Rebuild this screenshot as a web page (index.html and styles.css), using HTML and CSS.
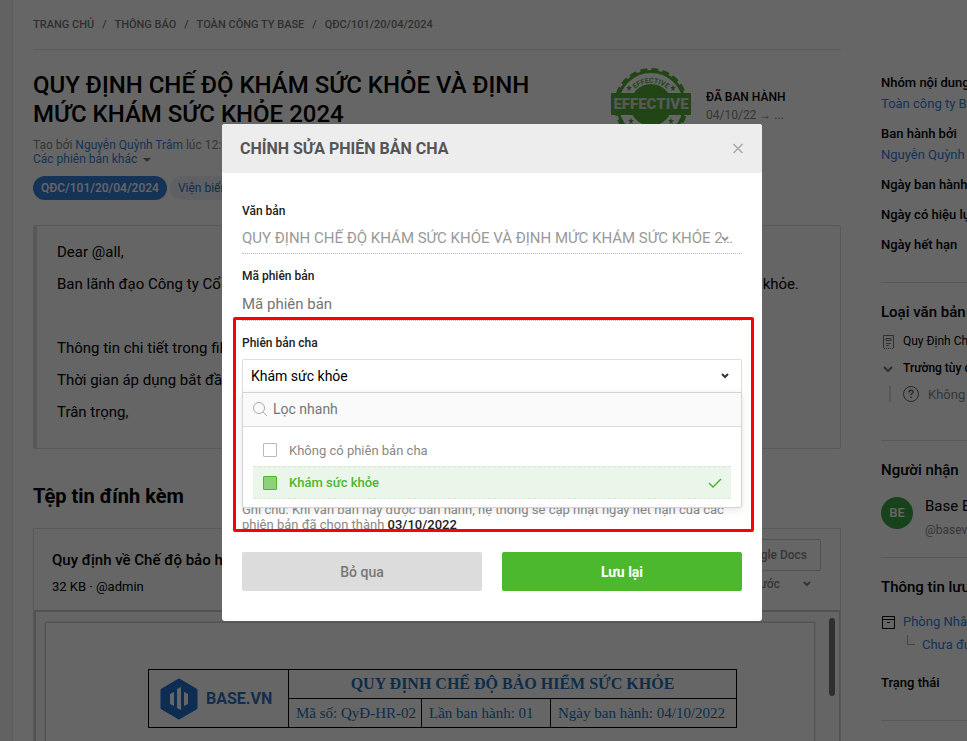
FILE: index.html
```
<!DOCTYPE html>
<html lang="vi">
<head>
    <meta charset="UTF-8">
    <meta name="viewport" content="width=device-width, initial-scale=1.0">
    <title>Chỉnh sửa phiên bản cha</title>
    <link rel="stylesheet" href="styles.css">
</head>
<body>
    <div class="page">
        <main class="main">
            <nav class="breadcrumb">
                <a href="#">TRANG CHỦ</a><span>/</span>
                <a href="#">THÔNG BÁO</a><span>/</span>
                <a href="#">TOÀN CÔNG TY BASE</a><span>/</span>
                <a href="#">QĐC/101/20/04/2024</a>
            </nav>

            <header class="doc-header">
                <div class="doc-heading">
                    <h1 class="doc-title">QUY ĐỊNH CHẾ ĐỘ KHÁM SỨC KHỎE VÀ ĐỊNH MỨC KHÁM SỨC KHỎE 2024</h1>
                    <p class="doc-meta">Tạo bởi <a href="#">Nguyễn Quỳnh Trâm</a> lúc 12:00</p>
                    <p class="doc-meta"><a href="#">Các phiên bản khác</a> <span class="caret"></span></p>
                    <div class="tags">
                        <span class="tag tag-primary">QĐC/101/20/04/2024</span>
                        <span class="tag">Viện biển</span>
                    </div>
                </div>
                <div class="doc-status">
                    <svg class="stamp" viewBox="0 0 80 76" aria-hidden="true">
                        <circle cx="40" cy="38" r="35" fill="#55ad36"/>
                        <circle cx="40" cy="38" r="35" fill="none" stroke="#55ad36" stroke-width="4" stroke-dasharray="7 4"/>
                        <circle cx="40" cy="38" r="26" fill="none" stroke="#fff" stroke-width="12"/>
                        <circle cx="40" cy="38" r="21" fill="#55ad36"/>
                        <path id="arc" d="M17 33A24 24 0 0 1 63 33" fill="none"/>
                        <text class="stamp-arc"><textPath href="#arc" startOffset="50%">EFFECTIVE</textPath></text>
                        <path d="M18 18l1 2 2 0-2 2 1 2-2-1-2 1 1-2-2-2 2 0zM62 18l1 2 2 0-2 2 1 2-2-1-2 1 1-2-2-2 2 0zM20 51l1 2 2 0-2 2 1 2-2-1-2 1 1-2-2-2 2 0zM60 51l1 2 2 0-2 2 1 2-2-1-2 1 1-2-2-2 2 0z" fill="#55ad36"/>
                        <rect y="26" width="80" height="22" rx="1" fill="#55ad36"/>
                        <text class="stamp-text" x="40" y="42">EFFECTIVE</text>
                    </svg>
                    <div class="status-text">
                        <strong>ĐÃ BAN HÀNH</strong>
                        <span>04/10/22 → ...</span>
                    </div>
                </div>
            </header>

            <section class="doc-body">
                <p>Dear @all,</p>
                <p class="split"><span>Ban lãnh đạo Công ty Cổ</span><span>khỏe.</span></p>
                <p>&nbsp;</p>
                <p>Thông tin chi tiết trong file</p>
                <p>Thời gian áp dụng bắt đầu</p>
                <p>Trân trọng,</p>
            </section>

            <h2 class="section-title">Tệp tin đính kèm</h2>

            <section class="file-card">
                <div class="file-head">
                    <div>
                        <h3 class="file-name">Quy định về Chế độ bảo hiểm</h3>
                        <p class="file-info">32 KB · @admin</p>
                    </div>
                    <div class="file-actions">
                        <button class="docs-btn" type="button">Google Docs</button>
                        <button class="size-btn" type="button">Kích thước
                            <svg width="8" height="6" viewBox="0 0 8 6"><path d="M1 1l3 3 3-3" fill="none" stroke="currentColor" stroke-width="2"/></svg>
                        </button>
                    </div>
                </div>
                <div class="preview">
                    <div class="sheet">
                        <table class="sheet-table">
                            <colgroup><col class="col-logo"><col class="col-code"><col class="col-rev"><col></colgroup>
                            <tr>
                                <td rowspan="2">
                                    <div class="brand">
                                        <svg width="38" height="42" viewBox="0 0 38 42">
                                            <path d="M19 2L36 12V30L19 40 2 30V12z" fill="#2270cc" stroke="#2270cc" stroke-width="3" stroke-linejoin="round"/>
                                            <path d="M10 16l4-2v14l-4-2zM17 11l4-2v23l-4-2zM24 14l4 2v10l-4 2z" fill="#fff"/>
                                        </svg>
                                        <span>BASE.VN</span>
                                    </div>
                                </td>
                                <th colspan="3">QUY ĐỊNH CHẾ ĐỘ BẢO HIỂM SỨC KHỎE</th>
                            </tr>
                            <tr>
                                <td>Mã số: QyĐ-HR-02</td>
                                <td>Lần ban hành: 01</td>
                                <td>Ngày ban hành: 04/10/2022</td>
                            </tr>
                        </table>
                    </div>
                    <div class="scroll-thumb"></div>
                </div>
            </section>
        </main>

        <aside class="side">
            <section class="side-block">
                <dl class="facts">
                    <dt>Nhóm nội dung</dt>
                    <dd><a href="#">Toàn công ty BASE</a></dd>
                    <dt>Ban hành bởi</dt>
                    <dd><a href="#">Nguyễn Quỳnh Trâm</a></dd>
                    <dt>Ngày ban hành</dt>
                    <dt>Ngày có hiệu lực</dt>
                    <dt>Ngày hết hạn</dt>
                </dl>
            </section>
            <section class="side-block side-type">
                <h4>Loại văn bản</h4>
                <p class="side-row">
                    <svg width="16" height="14" viewBox="0 0 16 14"><path d="M2.5 13V.5h10V13M5 3.5h5v2H5zM5 8.5h5M5 10.5h3" fill="none" stroke="#777"/><path d="M3 13.5h10" stroke="#777" stroke-dasharray="1 1"/></svg>
                    Quy Định Chung
                </p>
                <p class="side-row side-strong">
                    <svg width="16" height="14" viewBox="0 0 16 14"><path d="M3 5l4 4 4-4" fill="none" stroke="#777" stroke-width="2"/></svg>
                    Trường tùy chỉnh
                </p>
                <p class="side-sub">
                    <svg width="16" height="16" viewBox="0 0 16 16"><circle cx="8" cy="8" r="7.5" fill="none" stroke="#666"/><path d="M6 6.500c0-3 4-3 4-.5 0 1.500-2 1.500-2 3M8 10.500v1.500" fill="none" stroke="#666" stroke-width="1.500"/></svg>
                    Không có
                </p>
            </section>
            <section class="side-block side-people">
                <h4>Người nhận</h4>
                <div class="person">
                    <span class="avatar">BE</span>
                    <div>
                        <div class="person-name">Base Enterprise</div>
                        <div class="person-id">@basevn</div>
                    </div>
                </div>
            </section>
            <section class="side-block side-store">
                <h4>Thông tin lưu trữ</h4>
                <p class="side-row">
                    <svg width="16" height="14" viewBox="0 0 16 14"><path d="M1.500 1.500h12v12h-12zM1.500 4.500h12M6 7.500h3" fill="none" stroke="#000"/></svg>
                    <a href="#">Phòng Nhân sự</a>
                </p>
                <p class="side-leaf"><span class="elbow"></span><a href="#">Chưa được lưu</a></p>
                <p class="side-state">Trạng thái</p>
            </section>
        </aside>
    </div>

    <div class="overlay">
        <form class="modal" role="dialog" aria-labelledby="modalTitle">
            <header class="modal-header">
                <h2 id="modalTitle">CHỈNH SỬA PHIÊN BẢN CHA</h2>
                <button class="close" type="button" aria-label="Đóng">
                    <svg width="12" height="12" viewBox="0 0 12 12"><path d="M1.500 1l9 9M10.500 1l-9 9" stroke="#aaa" stroke-width="1.500"/></svg>
                </button>
            </header>
            <div class="modal-body">
                <div class="field">
                    <label for="doc">Văn bản</label>
                    <div class="line-wrap">
                        <select id="doc" class="line-input" disabled>
                            <option>QUY ĐỊNH CHẾ ĐỘ KHÁM SỨC KHỎE VÀ ĐỊNH MỨC KHÁM SỨC KHỎE 2024</option>
                        </select>
                        <svg class="line-arrow" width="8" height="6" viewBox="0 0 8 6"><path d="M1 1l3 3 3-3" fill="none" stroke="#999" stroke-width="2"/></svg>
                    </div>
                </div>
                <div class="field">
                    <label for="code">Mã phiên bản</label>
                    <input id="code" class="line-input line-text" type="text" placeholder="Mã phiên bản">
                </div>
                <div class="field">
                    <label for="parent">Phiên bản cha</label>
                    <div class="dropdown">
                        <button id="parent" class="dropdown-toggle" type="button" aria-haspopup="listbox" aria-expanded="true">
                            Khám sức khỏe
                            <svg width="8" height="6" viewBox="0 0 8 6"><path d="M1 1l3 3 3-3" fill="none" stroke="#333" stroke-width="2"/></svg>
                        </button>
                        <div class="dropdown-menu">
                            <div class="filter">
                                <svg width="14" height="14" viewBox="0 0 14 14"><circle cx="6" cy="6" r="5.500" fill="none" stroke="#aaa"/><path d="M10 10l4 4" stroke="#aaa"/></svg>
                                <input type="text" placeholder="Lọc nhanh" aria-label="Lọc nhanh">
                            </div>
                            <div class="options">
                                <label class="option"><input type="checkbox">Không có phiên bản cha</label>
                                <label class="option selected"><input type="checkbox" checked>Khám sức khỏe
                                    <svg width="14" height="10" viewBox="0 0 14 10"><path d="M1 5l4 4 8-8" fill="none" stroke="#4cb82e" stroke-width="1.500"/></svg>
                                </label>
                            </div>
                        </div>
                    </div>
                </div>
                <p class="note">Ghi chú: Khi văn bản này được ban hành, hệ thống sẽ cập nhật ngày hết hạn của các phiên bản đã chọn thành <b>03/10/2022</b></p>
                <div class="modal-actions">
                    <button class="btn btn-cancel" type="button">Bỏ qua</button>
                    <button class="btn btn-save" type="submit">Lưu lại</button>
                </div>
            </div>
            <div class="highlight"></div>
        </form>
    </div>
</body>
</html>
```
FILE: styles.css
```
* {
    margin: 0;
    padding: 0;
    box-sizing: border-box;
}

body {
    font-family: Roboto, Arial, sans-serif;
    font-size: 13px;
    color: #000;
    background: #f6f6f6;
    height: 100vh;
    overflow: hidden;
}

a {
    color: #3480da;
    text-decoration: none;
}

button, input, select {
    font-family: inherit;
}

.page {
    display: flex;
    height: 100vh;
    overflow: hidden;
    margin-left: 12px;
    border-left: 1px solid #e4e4e4;
    background: #fff;
}

.main {
    flex: 1;
    min-width: 0;
    padding: 0 40px 0 20px;
}

/* breadcrumb */
.breadcrumb {
    display: flex;
    gap: 8px;
    height: 50px;
    line-height: 50px;
    font-size: 11px;
    font-weight: 500;
    border-bottom: 1px solid #e6e6e6;
}

.breadcrumb a, .breadcrumb span {
    color: #777;
}

/* document header */
.doc-header {
    display: flex;
    justify-content: space-between;
    padding-top: 21px;
}

.doc-heading {
    width: 520px;
}

.doc-title {
    font-size: 24px;
    font-weight: 500;
    line-height: 29px;
    margin-bottom: 9px;
}

.doc-meta {
    font-size: 12px;
    line-height: 14px;
    color: #888;
}

.caret {
    display: inline-block;
    margin-left: 3px;
    border: 4px solid transparent;
    border-top-color: #777;
    border-bottom: 0;
    vertical-align: middle;
}

.tags {
    display: flex;
    gap: 3px;
    margin-top: 10px;
}

.tag {
    padding: 0 8px;
    line-height: 24px;
    font-size: 12px;
    border-radius: 12px;
    background: #eceff8;
    color: #3470c4;
}

.tag-primary {
    background: #3480da;
    color: #fff;
    font-weight: 500;
}

.doc-status {
    display: flex;
    gap: 15px;
    width: 230px;
}

.stamp {
    width: 80px;
    height: 76px;
    margin-top: -4px;
}

.stamp-text {
    font: 900 15px Roboto, sans-serif;
    fill: #ddd;
    text-anchor: middle;
}

.stamp-arc {
    font: 700 7px Roboto, sans-serif;
    fill: #55ad36;
    text-anchor: middle;
}

.status-text {
    padding-top: 17px;
    font-size: 12px;
    line-height: 18px;
}

.status-text strong {
    display: block;
    font-weight: 500;
}

.status-text span {
    color: #888;
}

/* document text */
.doc-body {
    margin-top: 25px;
    padding: 10px 41px 20px 20px;
    border: 1px solid #ddd;
    border-left: 4px solid #ddd;
    border-radius: 2px;
    background: #fdfdfd;
    font-size: 15px;
    line-height: 32px;
}

.split {
    display: flex;
    justify-content: space-between;
}

.section-title {
    margin: 34px 0 19px;
    font-size: 20px;
    font-weight: 700;
    line-height: 26px;
}

/* attachment */
.file-card {
    border: 1px solid #ddd;
}

.file-head {
    display: flex;
    justify-content: space-between;
    height: 81px;
    padding: 10px 19px 10px 18px;
}

.file-name {
    margin-top: 8px;
    font-size: 15px;
    font-weight: 500;
    line-height: 26px;
}

.file-info {
    font-size: 13px;
    line-height: 28px;
}

.file-actions {
    display: flex;
    flex-direction: column;
    align-items: flex-end;
    color: #888;
}

.docs-btn, .size-btn {
    font-size: 12px;
    font-weight: 500;
    color: #888;
    background: none;
    border: 0;
}

.docs-btn {
    height: 32px;
    padding: 0 13px;
    border: 1px solid #ccc;
    border-radius: 2px;
}

.size-btn {
    display: flex;
    align-items: center;
    gap: 23px;
    height: 26px;
    padding: 0 10px;
}

.preview {
    display: flex;
    align-items: flex-start;
    height: 300px;
    padding: 6px 4px 0 9px;
    border: 2px solid #ccc;
    border-width: 2px 1px 0 2px;
    background: #fcfcfc;
}

.sheet {
    flex: 1;
    height: 290px;
    margin-top: 4px;
    margin-right: 14px;
    padding: 46px 77px 0 102px;
    border: 1px solid #ccc;
    box-shadow: 0 0 2px #ccc;
    background: #fff;
}

.scroll-thumb {
    width: 6px;
    height: 78px;
    border-radius: 3px;
    background: #777;
}

.sheet-table {
    width: 100%;
    table-layout: fixed;
    border-collapse: collapse;
    font-family: "Liberation Serif", "Times New Roman", serif;
    font-size: 15px;
    color: #1f71b8;
}

.sheet-table td, .sheet-table th {
    height: 29px;
    border: 1px solid #000;
    white-space: nowrap;
}

.sheet-table td {
    padding-left: 7px;
}

.sheet-table th {
    font-size: 16px;
    text-align: center;
}

.col-logo {
    width: 140px;
}

.col-code {
    width: 133px;
}

.col-rev {
    width: 129px;
}

.brand {
    display: flex;
    align-items: center;
    gap: 8px;
    padding-left: 4px;
    font: 700 16px Roboto, sans-serif;
    color: #3470c4;
}

/* right column */
.side {
    flex: 0 0 86px;
    overflow: hidden;
    white-space: nowrap;
    padding-top: 72px;
}

.side-block {
    border-bottom: 1px solid #ddd;
}

.side-block h4 {
    font-size: 15px;
    font-weight: 500;
    line-height: 20px;
}

.facts {
    height: 210px;
    line-height: 21px;
}

.facts dt {
    font-weight: 500;
    margin-bottom: 9px;
}

.facts dt:has(+ dd) {
    margin-bottom: 0;
}

.facts dd {
    margin-bottom: 9px;
}

.side-row {
    display: flex;
    align-items: center;
    gap: 6px;
    line-height: 27px;
    font-size: 12px;
}

.side-row svg, .side-sub svg {
    flex: none;
}

.side-strong {
    font-weight: 500;
}

.side-type {
    height: 158px;
    padding-top: 19px;
}

.side-type h4 {
    margin-bottom: 6px;
}

.side-sub {
    display: flex;
    align-items: center;
    gap: 9px;
    margin-left: 8px;
    padding-left: 12px;
    height: 16px;
    margin-top: 4px;
    border-left: 2px solid #ddd;
    color: #888;
}

.side-people {
    height: 117px;
    padding-top: 19px;
}

.person {
    display: flex;
    gap: 12px;
    margin-top: 14px;
}

.avatar {
    flex: none;
    width: 32px;
    height: 32px;
    margin-top: 3px;
    border-radius: 50%;
    background: #3da547;
    color: #fff;
    font-weight: 500;
    line-height: 32px;
    text-align: center;
}

.person-name {
    font-size: 15px;
    line-height: 24px;
}

.person-id {
    font-size: 12px;
    line-height: 24px;
    color: #888;
}

.side-store {
    height: 163px;
    padding-top: 19px;
}

.side-store h4 {
    margin-bottom: 11px;
}

.side-store .side-row {
    font-size: 13px;
}

.side-leaf {
    display: flex;
    gap: 7px;
    padding-left: 26px;
    line-height: 20px;
}

.elbow {
    flex: none;
    width: 8px;
    height: 10px;
    border: 1px solid #aaa;
    border-width: 0 0 1px 1px;
}

.side-state {
    margin-top: 18px;
    font-weight: 500;
    line-height: 20px;
}

/* modal */
.overlay {
    position: fixed;
    inset: 0;
    display: flex;
    justify-content: center;
    align-items: flex-start;
    padding: 124px 0 0 17px;
    background: rgba(0, 0, 0, 0.6);
}

.modal {
    position: relative;
    width: 540px;
    background: #fff;
    border-radius: 3px;
}

.modal-header {
    display: flex;
    align-items: center;
    justify-content: space-between;
    height: 49px;
    padding: 0 18px;
    background: #ededed;
    border-radius: 3px 3px 0 0;
}

.modal-header h2 {
    font-size: 16px;
    font-weight: 700;
    color: #555;
}

.close {
    display: flex;
    border: 0;
    background: none;
}

.modal-body {
    padding: 29px 20px 30px;
}

.field label[for] {
    display: block;
    font-size: 12px;
    font-weight: 500;
    line-height: 18px;
    color: #222;
}

.line-wrap {
    position: relative;
}

.line-input {
    display: block;
    width: 100%;
    height: 34px;
    margin-bottom: 13px;
    padding: 2px 4px 0 0;
    border: 0;
    border-bottom: 1px dotted #bbb;
    background: none;
    appearance: none;
    font-size: 15px;
    text-overflow: ellipsis;
    overflow: hidden;
    white-space: nowrap;
    outline: 0;
}

.line-text {
    height: 36px;
}

.line-input:disabled {
    color: #999;
    opacity: 1;
}

.line-input::placeholder {
    color: #757575;
}

.line-arrow {
    position: absolute;
    right: 13px;
    top: 16px;
}

.dropdown {
    position: relative;
    margin-top: 7px;
}

.dropdown-toggle {
    display: flex;
    align-items: center;
    justify-content: space-between;
    width: 100%;
    height: 34px;
    padding: 0 12px 0 8px;
    border: 1px solid #ddd;
    border-radius: 2px 2px 0 0;
    background: #fff;
    color: #000;
    font-size: 14px;
}

.dropdown-menu {
    position: absolute;
    top: 33px;
    left: 0;
    right: 0;
    border: 1px solid #d4d4d4;
    border-radius: 0 0 2px 2px;
    background: #fff;
    box-shadow: 0 2px 8px rgba(0, 0, 0, 0.1);
}

.filter {
    display: flex;
    align-items: center;
    gap: 6px;
    height: 34px;
    padding: 0 10px 2px;
    background: #fafafa;
    border-bottom: 1px solid #ddd;
}

.filter input {
    flex: 1;
    border: 0;
    background: none;
    font-size: 14px;
    outline: 0;
}

.options {
    padding: 7px 10px 8px;
}

.option {
    display: flex;
    align-items: center;
    gap: 12px;
    height: 32px;
    padding: 0 9px 0 10px;
    color: #888;
}

.option input {
    appearance: none;
    width: 14px;
    height: 14px;
    border: 1px solid #bbb;
    border-radius: 1px;
    background: #fff;
}

.option.selected {
    height: 33px;
    color: #4cb82e;
    font-weight: 500;
    background: #ebf6ea;
    border: 1px dashed #d8e8d6;
    border-width: 1px 0;
}

.option.selected svg {
    margin-left: auto;
}

.option input:checked {
    border-color: #4cb82e;
    background: #8bd27a;
}

.note {
    margin-top: 109px;
    font-size: 13px;
    line-height: 15px;
    color: #888;
}

.note b {
    font-weight: 500;
    color: #222;
}

.modal-actions {
    display: flex;
    gap: 20px;
    margin-top: 20px;
}

.btn {
    flex: 1;
    height: 39px;
    border: 0;
    border-radius: 2px;
    font-size: 14px;
    font-weight: 500;
}

.btn-cancel {
    background: #dcdcdc;
    color: #777;
}

.btn-save {
    background: #4cb82e;
    color: #fff;
    font-weight: 700;
}

/* red frame around the parent version field */
.highlight {
    position: absolute;
    top: 193px;
    left: 11px;
    right: 8px;
    height: 215px;
    border: 3px solid #f00;
    border-radius: 2px;
    pointer-events: none;
}
```
